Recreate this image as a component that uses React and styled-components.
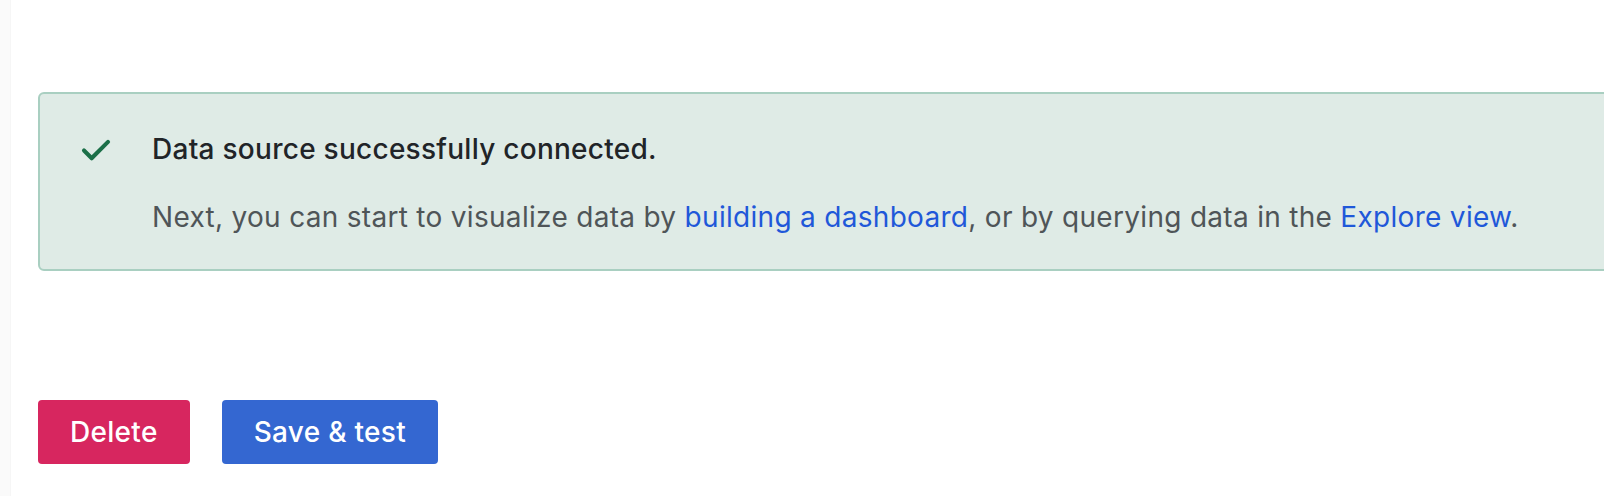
import React from 'react';
import styled, { createGlobalStyle } from 'styled-components';

const GlobalStyle = createGlobalStyle`
  html, body {
    margin: 0;
    padding: 0;
    background: #ffffff;
    font-family: Inter, "Noto Sans", "Liberation Sans", sans-serif;
    -webkit-font-smoothing: antialiased;
  }
`;

const Page = styled.div`
  display: flex;
  min-height: 496px;
  overflow: hidden;
`;

const SideEdge = styled.div`
  flex: 0 0 10px;
  background: #fafafa;
  border-right: 1px solid #f6f6f6;
`;

const Content = styled.main`
  flex: 1;
  display: flex;
  flex-direction: column;
  padding: 92px 0 0 27px;
  min-width: 0;
`;

const Alert = styled.div`
  display: flex;
  gap: 32px;
  width: calc(100% + 40px);
  box-sizing: border-box;
  padding: 32px 32px 31px;
  background: #dfebe6;
  border: 2px solid #a9cfc1;
  border-radius: 6px;
`;

const IconBox = styled.div`
  flex: 0 0 48px;
  height: 48px;
  display: flex;
  align-items: center;
  justify-content: center;
  color: #1b6f48;
`;

const AlertBody = styled.div`
  display: flex;
  flex-direction: column;
  gap: 26px;
  padding-top: 2px;
`;

const Title = styled.div`
  font-size: 28px;
  line-height: 42px;
  font-weight: 500;
  letter-spacing: 0.27px;
  color: #212428;
`;

const Text = styled.div`
  font-size: 28px;
  line-height: 42px;
  font-weight: 400;
  letter-spacing: 0.3px;
  color: #4f5558;
`;

const Link = styled.a`
  color: #1f58d9;
  text-decoration: none;
`;

const Actions = styled.div`
  display: flex;
  gap: 32px;
  margin-top: 129px;
`;

const Button = styled.button`
  height: 64px;
  padding: 0 32px;
  border: none;
  border-radius: 4px;
  font-family: inherit;
  font-size: 28px;
  font-weight: 500;
  letter-spacing: 0.3px;
  color: #ffffff;
  background: ${p => (p.$variant === 'danger' ? '#d7265f' : '#3467d1')};
  cursor: pointer;
`;

const CheckIcon = () => (
  <svg width="48" height="48" viewBox="0 0 24 24" fill="currentColor">
    <path d="M18.71,7.21a1,1,0,0,0-1.42,0L9.84,14.67,6.71,11.53A1,1,0,1,0,5.29,13l3.84,3.84a1,1,0,0,0,1.42,0l8.16-8.160A1,1,0,0,0,18.71,7.21Z" />
  </svg>
);

const App = () => {
  return (
    <>
      <GlobalStyle />
      <Page>
        <SideEdge />
        <Content>
          <Alert>
            <IconBox>
              <CheckIcon />
            </IconBox>
            <AlertBody>
              <Title>Data source successfully connected.</Title>
              <Text>
                Next, you can start to visualize data by <Link href="#">building a dashboard</Link>, or by querying data in the <Link href="#">Explore view</Link>.
              </Text>
            </AlertBody>
          </Alert>
          <Actions>
            <Button $variant="danger">Delete</Button>
            <Button>Save &amp; test</Button>
          </Actions>
        </Content>
      </Page>
    </>
  );
};

export default App;
